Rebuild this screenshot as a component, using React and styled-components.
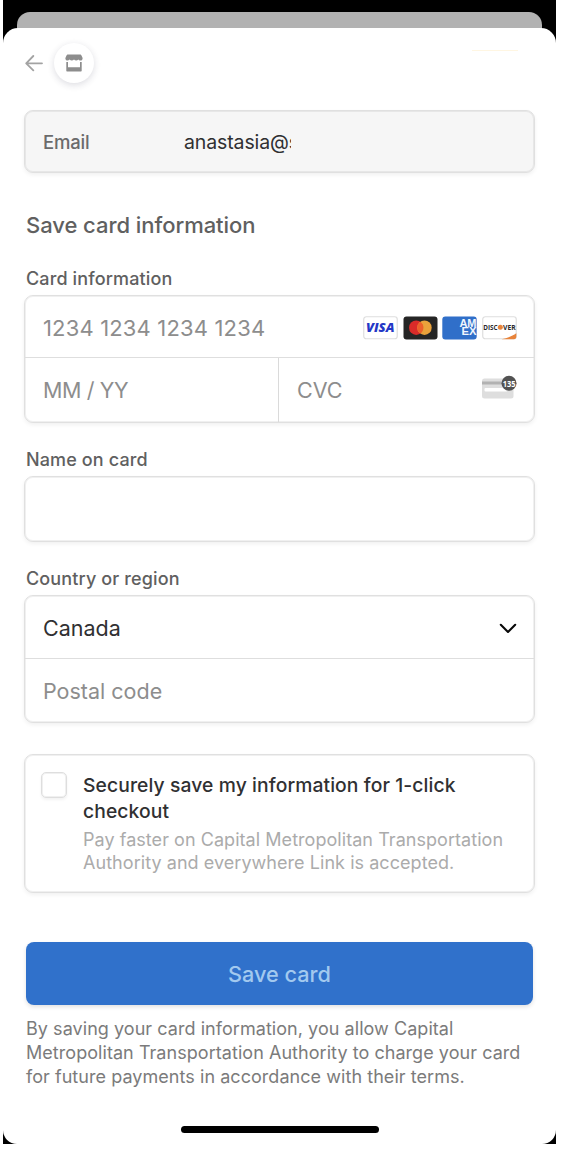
import React from "react";
import styled, { createGlobalStyle } from "styled-components";

const Global = createGlobalStyle`
  * { box-sizing: border-box; }
  html, body { margin: 0; background: #fff; }
  body { font-family: Inter, "Liberation Sans", sans-serif; -webkit-font-smoothing: antialiased; }
  p, h1, form { margin: 0; }
`;

const Phone = styled.div`
  width: 553px;
  height: 1144px;
  margin-left: 3px;
  padding-top: 12px;
  background: #000;
  display: flex;
  flex-direction: column;
`;
const BackSheet = styled.div`
  flex: none;
  height: 32px;
  margin: 0 14px -16px;
  border-radius: 13px 13px 0 0;
  background: #b2b2b2;
`;
const Sheet = styled.main`
  position: relative;
  flex: 1;
  display: flex;
  flex-direction: column;
  padding: 15px 21px 0;
  border-radius: 15px 15px 14px 14px;
  background: #fff;
`;
const Header = styled.header`
  display: flex;
  align-items: center;
  gap: 11px;
  height: 40px;
  padding-left: 1px;
`;
const StoreBadge = styled.div`
  display: grid;
  place-items: center;
  width: 40px;
  height: 40px;
  border-radius: 50%;
  background: #fff;
  box-shadow: 0 2px 7px rgba(40, 40, 70, 0.16);
`;
const AccentLine = styled.i`
  width: 46px;
  height: 1px;
  margin: -26px 17px 0 auto;
  background: #fff6e2;
`;
const Text = styled.span`
  display: block;
  white-space: nowrap;
  font-size: ${(p) => p.$size}px;
  line-height: ${(p) => p.$line || 24}px;
  font-weight: ${(p) => p.$weight || 400};
  letter-spacing: ${(p) => p.$track || 0}px;
  color: ${(p) => p.$color};
`;
const Box = styled.div`
  border: 1px solid #e0e0e0;
  border-radius: 9px;
  background: ${(p) => p.$fill || "#fff"};
  box-shadow: inset 0 0 0 1px rgba(0, 0, 0, 0.06), 0 2px 4px rgba(0, 0, 0, 0.06);
`;
const EmailBox = styled(Box)`
  display: grid;
  grid-template-columns: 141px 107px;
  align-items: center;
  height: 63px;
  margin-top: 27px;
  padding-left: 18px;
`;
const Clipped = styled.div`
  overflow: hidden;
`;
const Title = styled(Text).attrs({ as: "h1" })`
  margin: 40px 0 0 2px;
`;
const Label = styled(Text).attrs({ as: "label", $size: 18, $weight: 500, $track: 0.13, $color: "#606060" })`
  margin: ${(p) => p.$top}px 0 4px 2px;
`;
const Group = styled(Box)`
  height: ${(p) => p.$height}px;
  display: flex;
  flex-direction: column;
`;
const Row = styled.div`
  display: flex;
  align-items: center;
  justify-content: space-between;
  flex: ${(p) => (p.$last ? "1" : "none")};
  height: ${(p) => p.$height || 63}px;
  padding: ${(p) => (p.$split ? "0" : "0 17px 0 18px")};
  border-bottom: ${(p) => (p.$last ? "0" : "1px solid #dedede")};
`;
const Cell = styled.div`
  display: flex;
  align-items: center;
  justify-content: space-between;
  align-self: stretch;
  width: ${(p) => p.$width || "auto"};
  flex: ${(p) => (p.$width ? "none" : "1")};
  padding: 0 17px 1px 18px;
  border-right: ${(p) => (p.$width ? "1px solid #dadada" : "0")};
`;
const CardNumber = styled(Text)`
  padding-top: 2px;
`;
const Brands = styled.div`
  display: flex;
  gap: 4.7px;
  padding-top: 2px;
`;
const CountryRow = styled(Row)`
  padding-top: 2px;
`;
const SaveBox = styled(Box)`
  display: flex;
  gap: 16px;
  height: 139px;
  margin-top: 31px;
  padding: 17px 0 0 16px;
`;
const Check = styled.div`
  flex: none;
  width: 26px;
  height: 26px;
  border: 1px solid #dedede;
  border-radius: 5px;
  box-shadow: inset 0 0 0 1px rgba(0, 0, 0, 0.06), 0 2px 3px rgba(0, 0, 0, 0.05);
`;
const SaveNote = styled.div`
  display: flex;
  flex-direction: column;
  gap: 4px;
  padding-top: 1px;
`;
const Button = styled.button`
  display: grid;
  place-items: center;
  flex: none;
  height: 63px;
  margin: 49px 2px 12px;
  border: 0;
  border-radius: 8px;
  background: #3071cb;
  font-family: inherit;
  box-shadow: 0 2px 4px rgba(0, 0, 0, 0.12);
`;
const Terms = styled.div`
  padding-left: 2px;
`;
const HomeBar = styled.div`
  width: 198px;
  height: 7px;
  margin: auto auto 11px;
  border-radius: 4px;
  background: #000;
`;

const BackArrow = () => (
  <svg width="18" height="18" viewBox="0 0 18 18" fill="none" stroke="#a3a3a3" strokeWidth="1.8" strokeLinecap="round" strokeLinejoin="round">
    <path d="M17 9.3H1.3M8.3 2L1.2 9.3L8.3 16.4" />
  </svg>
);
const Store = () => (
  <svg width="18" height="18" viewBox="0 0 18 18" fill="#8d8d8d">
    <path d="M3 .5H15C15.8.5 16.2.9 16.5 1.6L17.6 4C17.8 5.7 16.6 6.6 15.5 6.6C14.5 6.6 14 6.2 13.4 5.6C12.8 6.3 12 6.6 11.2 6.6C10.3 6.6 9.6 6.2 9 5.6C8.4 6.3 7.6 6.6 6.8 6.6C5.9 6.6 5.2 6.2 4.6 5.6C4 6.3 3.3 6.6 2.5 6.6C1.2 6.6.1 5.4.4 4L1.5 1.6C1.8.9 2.2.5 3 .5Z" />
    <path d="M1.3 8H3V13.3H15V8H16.7V16.8Q16.7 17.5 16 17.5H2Q1.3 17.5 1.3 16.8Z" />
  </svg>
);
const Visa = () => (
  <svg width="35" height="24" viewBox="0 0 35 24">
    <rect x=".75" y=".75" width="33.5" height="22" rx="2.5" fill="#fff" stroke="#dedede" strokeWidth="1.2" />
    <text x="3" y="16" textLength="28.5" lengthAdjust="spacingAndGlyphs" fontFamily="Open Sans" fontSize="12.5" fontWeight="800" fontStyle="italic" fill="#2337c6">VISA</text>
  </svg>
);
const Mastercard = () => (
  <svg width="35" height="24" viewBox="0 0 35 24">
    <rect x=".5" y=".5" width="34" height="23" rx="3" fill="#252525" />
    <circle cx="13.2" cy="11.7" r="7.2" fill="#d92b29" />
    <circle cx="21.5" cy="11.7" r="7.2" fill="#eaa23b" />
    <path d="M17.35 5.8A7.2 7.2 0 0 1 17.35 17.6A7.2 7.2 0 0 1 17.35 5.8Z" fill="#ec602b" />
  </svg>
);
const Amex = () => (
  <svg width="35" height="24" viewBox="0 0 35 24">
    <rect x=".3" y=".5" width="34.4" height="23" rx="3" fill="#306fc9" />
    <g fontFamily="Liberation Sans" fontSize="10.2" fontWeight="700" fill="#f1f6fd">
      <text x="17.4" y="11.2" textLength="17" lengthAdjust="spacingAndGlyphs">AM</text>
      <text x="19.6" y="19.4" textLength="15" lengthAdjust="spacingAndGlyphs">EX</text>
    </g>
  </svg>
);
const Discover = () => (
  <svg width="35" height="24" viewBox="0 0 35 24">
    <rect x=".75" y=".75" width="33.5" height="22" rx="2.5" fill="#fff" stroke="#dedede" strokeWidth="1.2" />
    <path d="M19.5 23.2C25 22.2 30.5 20 34.3 17.3V20.5Q34.3 23.2 31.8 23.2Z" fill="#e8833a" />
    <g fontFamily="Open Sans" fontSize="7" fontWeight="700" fill="#29292b">
      <text x="1.3" y="13.7" textLength="14.3" lengthAdjust="spacingAndGlyphs">DISC</text>
      <text x="21" y="13.7" textLength="12.6" lengthAdjust="spacingAndGlyphs">VER</text>
    </g>
    <circle cx="18.3" cy="11.3" r="2.5" fill="#e8833a" />
  </svg>
);
const CvcIcon = styled.svg`
  margin-bottom: 6px;
`;
const CvcCard = () => (
  <CvcIcon width="36" height="24" viewBox="0 0 36 24">
    <rect x="1" y="3.5" width="31.5" height="20" rx="2.5" fill="#dedede" />
    <rect x="1" y="6.5" width="31.5" height="3" fill="#b2b2b2" />
    <rect x="3.5" y="13" width="23" height="3.5" rx="1" fill="#fff" />
    <circle cx="28" cy="8.3" r="7.5" fill="#525252" />
    <text x="21.8" y="11.5" textLength="12.8" lengthAdjust="spacingAndGlyphs" fontFamily="Open Sans" fontSize="8.8" fontWeight="700" fill="#fff">135</text>
  </CvcIcon>
);
const Chevron = () => (
  <svg width="18" height="12" viewBox="0 0 18 12" fill="none" stroke="#080808" strokeWidth="2.1" strokeLinecap="round" strokeLinejoin="round">
    <path d="M1.8 2.8L9 9.9L16.2 2.8" />
  </svg>
);

const placeholder = { $size: 21.5, $color: "#8d8d8d" };

export default function App() {
  return (
    <>
      <Global />
      <Phone>
        <BackSheet />
        <Sheet>
          <Header>
            <BackArrow />
            <StoreBadge><Store /></StoreBadge>
            <AccentLine />
          </Header>
          <EmailBox $fill="#f6f6f6">
            <Text $size={18.5} $weight={500} $track={-0.2} $color="#6b6b6b">Email</Text>
            <Clipped><Text $size={19.5} $track={-0.12} $color="#303032">anastasia@s</Text></Clipped>
          </EmailBox>
          <Title $size={22} $weight={500} $track={-0.05} $color="#606060">Save card information</Title>
          <Label $top={30}>Card information</Label>
          <Group $height={128}>
            <Row $height={62}>
              <CardNumber $size={22} $track={0.16} $color="#8d8d8d">1234 1234 1234 1234</CardNumber>
              <Brands><Visa /><Mastercard /><Amex /><Discover /></Brands>
            </Row>
            <Row $last $split>
              <Cell $width="254px"><Text {...placeholder} $track={-0.4}>MM / YY</Text></Cell>
              <Cell><Text {...placeholder}>CVC</Text><CvcCard /></Cell>
            </Row>
          </Group>
          <Label $top={25}>Name on card</Label>
          <Group $height={66} />
          <Label $top={25}>Country or region</Label>
          <Group $height={128}>
            <CountryRow><Text $size={21.5} $color="#303032">Canada</Text><Chevron /></CountryRow>
            <Row $last><Text {...placeholder}>Postal code</Text></Row>
          </Group>
          <SaveBox>
            <Check />
            <SaveNote>
              <Text $size={19.3} $line={25.5} $track={0.1} $weight={500} $color="#303032">Securely save my information for 1-click<br />checkout</Text>
              <Text $size={18} $line={23} $track={0.05} $color="#ababab">Pay faster on Capital Metropolitan Transportation<br />Authority and everywhere Link is accepted.</Text>
            </SaveNote>
          </SaveBox>
          <Button><Text $size={21.7} $weight={500} $color="#a2c9ef">Save card</Text></Button>
          <Terms>
            <Text $size={18} $line={24.2} $track={0.05} $color="#7b7b7b">By saving your card information, you allow Capital<br />Metropolitan Transportation Authority to charge your card<br />for future payments in accordance with their terms.</Text>
          </Terms>
          <HomeBar />
        </Sheet>
      </Phone>
    </>
  );
}
